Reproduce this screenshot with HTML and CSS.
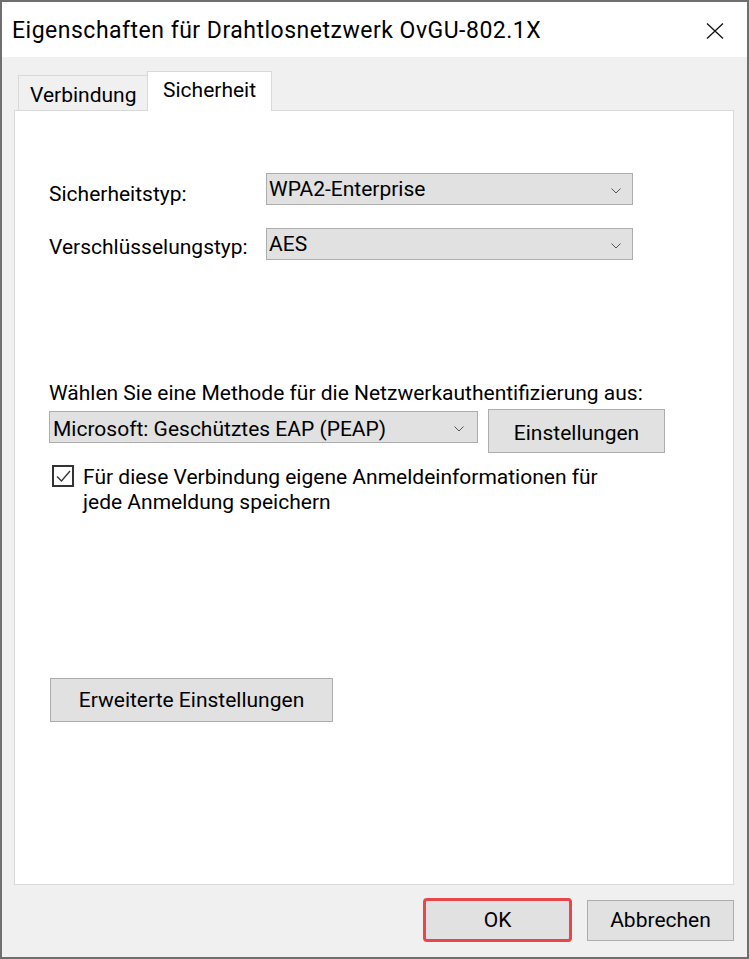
FILE: index.html
```html
<!DOCTYPE html>
<html>
<head>
    <meta charset="utf-8">
    <title>Eigenschaften für Drahtlosnetzwerk OvGU-802.1X</title>
    <link rel="stylesheet" href="styles.css">
</head>
<body>
<div class="window">
    <div class="titlebar">
        <span class="title">Eigenschaften für Drahtlosnetzwerk OvGU-802.1X</span>
        <svg class="close" width="18" height="16" viewBox="0 0 18 16">
            <path d="M1 0.5 L17 15.5 M17 0.5 L1 15.5" stroke="#111" stroke-width="1.3" fill="none"/>
        </svg>
    </div>

    <div class="client">
        <div class="tabs">
            <div class="tab">Verbindung</div>
            <div class="tab tab-active">Sicherheit</div>
        </div>

        <div class="panel">
            <div class="field">
                <span class="field-label">Sicherheitstyp:</span>
                <div class="combo combo-type">
                    <span>WPA2-Enterprise</span>
                    <svg class="chevron" width="10" height="6" viewBox="0 0 10 6">
                        <polyline points="0.5,0.5 5,5 9.5,0.5" fill="none" stroke="#555" stroke-width="1"/>
                    </svg>
                </div>
            </div>
            <div class="field field-next">
                <span class="field-label">Verschlüsselungstyp:</span>
                <div class="combo combo-type">
                    <span>AES</span>
                    <svg class="chevron" width="10" height="6" viewBox="0 0 10 6">
                        <polyline points="0.5,0.5 5,5 9.5,0.5" fill="none" stroke="#555" stroke-width="1"/>
                    </svg>
                </div>
            </div>

            <div class="method-label">Wählen Sie eine Methode für die Netzwerkauthentifizierung aus:</div>
            <div class="method-row">
                <div class="combo combo-method">
                    <span>Microsoft: Geschütztes EAP (PEAP)</span>
                    <svg class="chevron" width="10" height="6" viewBox="0 0 10 6">
                        <polyline points="0.5,0.5 5,5 9.5,0.5" fill="none" stroke="#555" stroke-width="1"/>
                    </svg>
                </div>
                <button class="btn btn-settings">Einstellungen</button>
            </div>

            <label class="check-row">
                <span class="checkbox">
                    <svg width="18" height="18" viewBox="0 0 18 18">
                        <polyline points="3,9.5 7.5,14 16,4" fill="none" stroke="#333" stroke-width="1.3"/>
                    </svg>
                </span>
                <span class="check-text">Für diese Verbindung eigene Anmeldeinformationen für jede Anmeldung speichern</span>
            </label>

            <button class="btn btn-advanced">Erweiterte Einstellungen</button>
        </div>

        <div class="footer">
            <button class="btn btn-ok">OK</button>
            <button class="btn btn-cancel">Abbrechen</button>
        </div>
    </div>
</div>
</body>
</html>
```

FILE: styles.css
```css
body {
    margin: 0;
    background: white;
    font-family: "Roboto", "Liberation Sans", sans-serif;
    font-size: 21px;
    color: black;
}

.window {
    width: 749px;
    height: 959px;
    box-sizing: border-box;
    border: 2px solid #6f6f6f;
    display: flex;
    flex-direction: column;
    background: #f0f0f0;
}

/* title bar */
.titlebar {
    height: 55px;
    box-sizing: border-box;
    padding: 3px 23px 0 10px;
    background: white;
    display: flex;
    align-items: center;
    justify-content: space-between;
}

.title {
    font-size: 23px;
    letter-spacing: 0.5px;
    line-height: 30px;
}

.close {
    display: block;
}

/* body of the dialog */
.client {
    flex: 1;
    display: flex;
    flex-direction: column;
    padding: 14px 13px 0 12px;
}

.tabs {
    display: flex;
    align-items: flex-end;
    padding-left: 4px;
    line-height: 24px;
}

.tab {
    width: 130px;
    height: 35px;
    box-sizing: border-box;
    padding: 7px 0 0 11px;
    border: 1px solid #d9d9d9;
    border-bottom: none;
    background: #f0f0f0;
}

.tab-active {
    width: 125px;
    height: 40px;
    margin-left: -1px;
    margin-bottom: -1px;
    padding: 6px 0 0 15px;
    background: white;
    position: relative;
    z-index: 1;
}

.panel {
    flex: 1;
    border: 1px solid #d9d9d9;
    background: white;
    padding: 62px 0 0 34px;
    line-height: 24px;
}

.field {
    display: flex;
    align-items: flex-start;
}

.field-next {
    margin-top: 22px;
}

.field-label {
    width: 217px;
    padding-top: 9px;
}

.field-next .field-label {
    padding-top: 7px;
}

.combo {
    height: 32px;
    box-sizing: border-box;
    border: 1px solid #adadad;
    background: #e1e1e1;
    display: flex;
    justify-content: space-between;
    align-items: flex-start;
}

.combo-type {
    width: 367px;
    padding: 3px 11px 0 2px;
}

.combo-type .chevron {
    margin-top: 11px;
}

.combo-method {
    width: 429px;
    margin-top: 2px;
    padding: 5px 13px 0 3px;
}

.combo-method .chevron {
    margin-top: 9px;
}

.method-label {
    margin-top: 121px;
}

.method-row {
    display: flex;
    align-items: flex-start;
    gap: 10px;
    margin-top: 4px;
}

.btn {
    font: inherit;
    color: black;
    line-height: 24px;
    background: #e1e1e1;
    border: 1px solid #adadad;
    border-radius: 0;
    padding: 0;
    box-sizing: border-box;
}

.btn-settings {
    width: 177px;
    height: 44px;
    padding-top: 4px;
}

.check-row {
    display: flex;
    align-items: flex-start;
    gap: 9px;
    margin: 12px 0 0 3px;
}

.checkbox {
    width: 22px;
    height: 22px;
    box-sizing: border-box;
    border: 2px solid #333;
    background: white;
    margin-top: 0;
    display: flex;
    align-items: center;
    justify-content: center;
}

.checkbox svg {
    display: block;
}

.check-text {
    max-width: 535px;
    line-height: 25px;
}

.btn-advanced {
    display: block;
    width: 283px;
    height: 44px;
    margin: 163px 0 0 1px;
}

/* OK / Abbrechen */
.footer {
    display: flex;
    justify-content: flex-end;
    align-items: center;
    gap: 15px;
    padding: 13px 0 15px;
}

.btn-ok {
    width: 149px;
    height: 44px;
    border: 3px solid #e8464a;
    border-radius: 4px;
}

.btn-cancel {
    width: 147px;
    height: 41px;
}
```
